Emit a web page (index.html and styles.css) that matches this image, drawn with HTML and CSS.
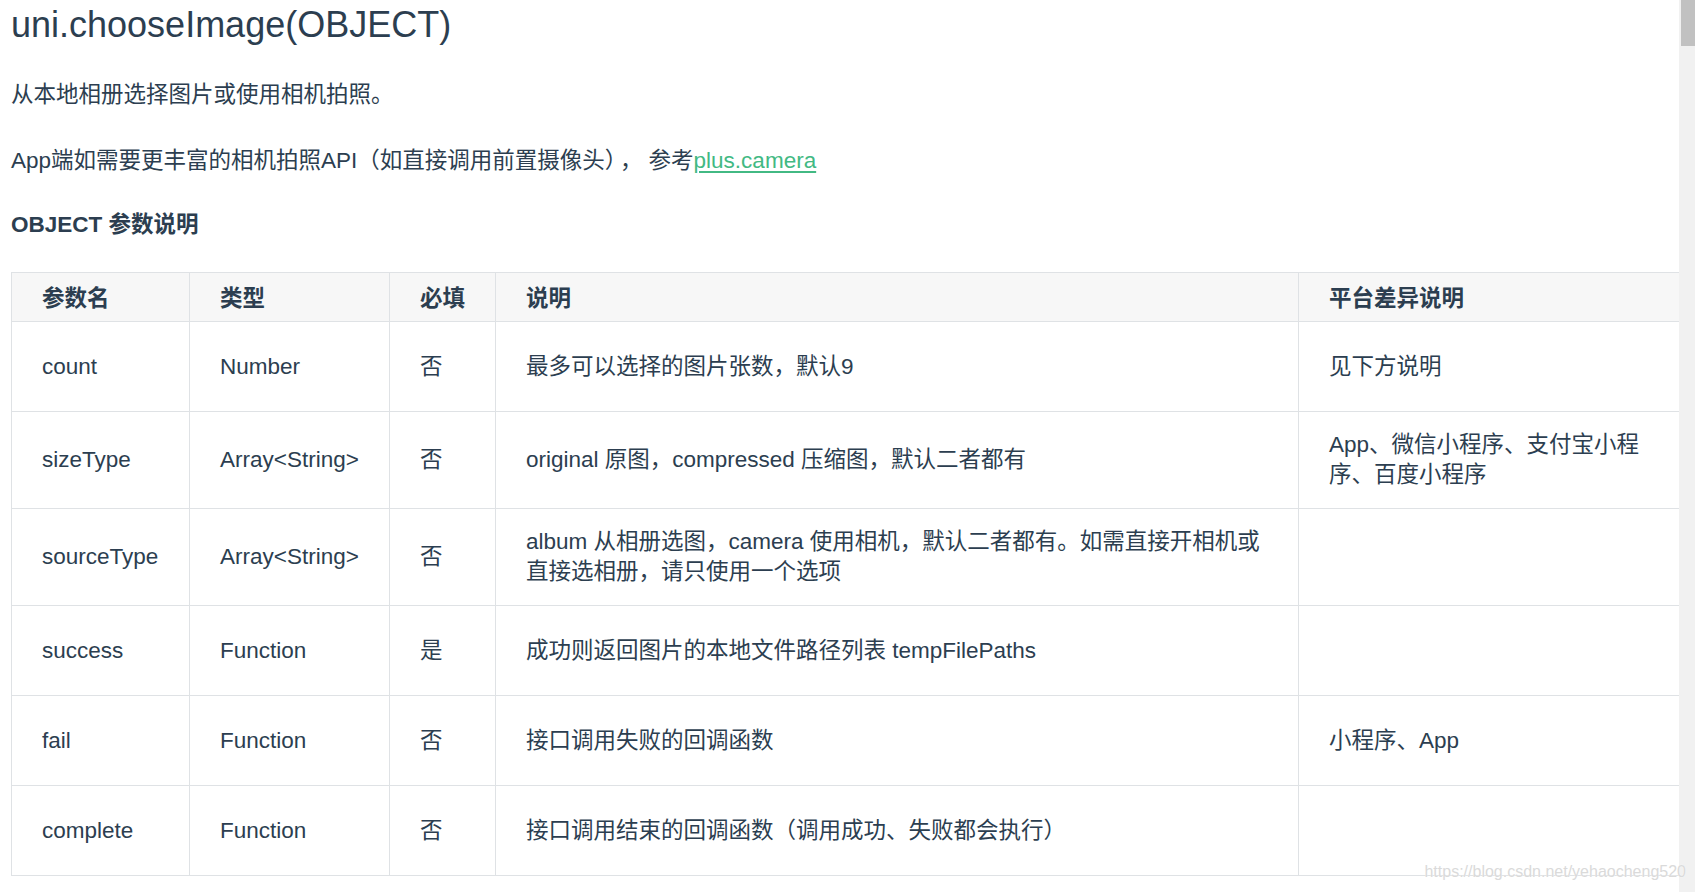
FILE: index.html
```html
<!DOCTYPE html>
<html lang="zh-CN">
<head>
<meta charset="utf-8">
<title>uni.chooseImage(OBJECT)</title>
<link rel="stylesheet" href="styles.css">
</head>
<body>
<div class="doc">
  <h1 class="title">uni.chooseImage(OBJECT)</h1>
  <p class="para para-first">从本地相册选择图片或使用相机拍照。</p>
  <p class="para">App端如需要更丰富的相机拍照API（如直接调用前置摄像头）<span class="comma">，</span>参考<a class="link" href="#">plus.camera</a></p>
  <h3 class="subtitle">OBJECT 参数说明</h3>
  <table class="params">
    <colgroup>
      <col class="c-name">
      <col class="c-type">
      <col class="c-req">
      <col class="c-desc">
      <col class="c-plat">
    </colgroup>
    <thead>
      <tr class="head-row">
        <th>参数名</th>
        <th>类型</th>
        <th>必填</th>
        <th>说明</th>
        <th>平台差异说明</th>
      </tr>
    </thead>
    <tbody>
      <tr class="body-row">
        <td>count</td>
        <td>Number</td>
        <td>否</td>
        <td>最多可以选择的图片张数，默认9</td>
        <td>见下方说明</td>
      </tr>
      <tr class="body-row">
        <td>sizeType</td>
        <td>Array&lt;String&gt;</td>
        <td>否</td>
        <td>original 原图，compressed 压缩图，默认二者都有</td>
        <td>App、微信小程序、支付宝小程序、百度小程序</td>
      </tr>
      <tr class="body-row">
        <td>sourceType</td>
        <td>Array&lt;String&gt;</td>
        <td>否</td>
        <td>album 从相册选图，camera 使用相机，默认二者都有。如需直接开相机或直接选相册，请只使用一个选项</td>
        <td></td>
      </tr>
      <tr class="body-row">
        <td>success</td>
        <td>Function</td>
        <td>是</td>
        <td>成功则返回图片的本地文件路径列表 tempFilePaths</td>
        <td></td>
      </tr>
      <tr class="body-row">
        <td>fail</td>
        <td>Function</td>
        <td>否</td>
        <td>接口调用失败的回调函数</td>
        <td>小程序、App</td>
      </tr>
      <tr class="body-row">
        <td>complete</td>
        <td>Function</td>
        <td>否</td>
        <td>接口调用结束的回调函数（调用成功、失败都会执行）</td>
        <td></td>
      </tr>
    </tbody>
  </table>
</div>
<div class="scrollbar"><div class="thumb"></div></div>
<div class="watermark">https://blog.csdn.net/yehaocheng520</div>
</body>
</html>
```

FILE: styles.css
```css
html, body {
  margin: 0;
  padding: 0;
  background: #ffffff;
  overflow: hidden;
}

body {
  font-family: "Liberation Sans", "Noto Sans CJK SC", sans-serif;
  color: #2c3e50;
  font-size: 22.5px;
  width: 1695px;
  height: 892px;
  position: relative;
}

.doc {
  padding-left: 11px;
}

.title {
  margin: 0;
  font-size: 36px;
  font-weight: normal;
  line-height: 48px;
  padding-top: 1px;
}

.para {
  margin: 36px 0 0 0;
  line-height: 30px;
}

.para-first {
  margin-top: 31px;
}

.comma {
  margin: 0 6px 0 4px;
}

.link {
  color: #42b983;
  text-decoration: underline;
  text-decoration-thickness: 2px;
  text-underline-offset: 3px;
}

.subtitle {
  margin: 34px 0 0 0;
  font-size: 22.5px;
  font-weight: bold;
  line-height: 30px;
}

.params {
  margin-top: 32px;
  border-collapse: collapse;
  table-layout: fixed;
  width: 1687px;
}

.c-name { width: 178px; }
.c-type { width: 200px; }
.c-req  { width: 106px; }
.c-desc { width: 803px; }
.c-plat { width: 400px; }

.params th,
.params td {
  border: 1px solid #dfe2e5;
  text-align: left;
  line-height: 30px;
  font-size: 22.5px;
}

.params th {
  padding: 11px 30px 7px 30px;
  font-weight: bold;
  background: #f7f7f7;
}

.params td {
  padding: 18px 30px;
  vertical-align: middle;
}

.body-row {
  height: 90px;
}

.scrollbar {
  position: absolute;
  top: 0;
  right: 0;
  width: 16px;
  height: 892px;
  background: #f1f1f1;
}

.thumb {
  margin-left: 2px;
  width: 14px;
  height: 46px;
  background: #c1c1c1;
}

.watermark {
  position: absolute;
  right: 9px;
  top: 862px;
  z-index: 2;
  font-size: 16px;
  line-height: 20px;
  color: #dadada;
  text-shadow: 0 0 1px #ffffff;
  white-space: nowrap;
}
```
